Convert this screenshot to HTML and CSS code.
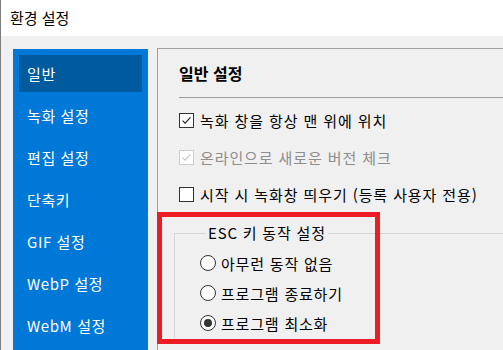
FILE: index.html
```html
<!DOCTYPE html>
<html lang="ko">
<head>
<meta charset="utf-8">
<link rel="stylesheet" href="styles.css">
</head>
<body>
<div class="window">
  <div class="titlebar">환경 설정</div>
  <div class="content">
    <nav class="sidebar">
      <div class="nav-item active">일반</div>
      <div class="nav-item">녹화 설정</div>
      <div class="nav-item">편집 설정</div>
      <div class="nav-item">단축키</div>
      <div class="nav-item">GIF 설정</div>
      <div class="nav-item">WebP 설정</div>
      <div class="nav-item">WebM 설정</div>
    </nav>
    <section class="panel">
      <h2 class="panel-title">일반 설정</h2>
      <div class="separator"></div>
      <div class="options">
        <label class="check-row"><span class="checkbox checked"><svg viewBox="0 0 15 15"><path d="M3 7.6 L6 10.6 L12 3.8" fill="none" stroke="#1a1a1a" stroke-width="1.2"/></svg></span>녹화 창을 항상 맨 위에 위치</label>
        <label class="check-row disabled"><span class="checkbox checked"><svg viewBox="0 0 15 15"><path d="M3 7.6 L6 10.6 L12 3.8" fill="none" stroke="#c4c4c4" stroke-width="1.2"/></svg></span>온라인으로 새로운 버전 체크</label>
        <label class="check-row"><span class="checkbox"></span>시작 시 녹화창 띄우기 (등록 사용자 전용)</label>
      </div>
      <fieldset class="group">
        <legend class="group-legend">ESC 키 동작 설정</legend>
        <label class="radio-row"><span class="radio"></span>아무런 동작 없음</label>
        <label class="radio-row"><span class="radio"></span>프로그램 종료하기</label>
        <label class="radio-row"><span class="radio selected"></span>프로그램 최소화</label>
      </fieldset>
      <div class="highlight"></div>
    </section>
  </div>
</div>
</body>
</html>
```

FILE: styles.css
```css
* { box-sizing: border-box; }
html, body { margin: 0; padding: 0; }
body {
  width: 503px;
  height: 350px;
  overflow: hidden;
  font-family: "Noto Sans CJK KR", "Noto Sans", sans-serif;
  font-size: 15px;
  color: #000;
  background: #fff;
}
.window {
  height: 350px;
  border-left: 1px solid #7f7f7f;
  display: flex;
  flex-direction: column;
}
.titlebar {
  height: 36px;
  flex: none;
  background: #fff;
  display: flex;
  align-items: center;
  padding-left: 9px;
  padding-bottom: 1px;
  font-size: 15px;
  line-height: 1;
}
.content {
  flex: 1;
  background: #f0f0f0;
  display: flex;
  padding: 12px 0 0 12px;
  gap: 9px;
}
.sidebar {
  width: 135px;
  flex: none;
  margin-top: 1px;
  background: #0078d7;
  padding: 6px;
  display: flex;
  flex-direction: column;
  gap: 5px;
}
.nav-item {
  height: 37px;
  flex: none;
  display: flex;
  align-items: center;
  padding-left: 8px;
  color: #fff;
  font-size: 15px;
  line-height: 1;
  letter-spacing: 0.6px;
}
.nav-item.active { background: #005a9e; }
.panel {
  flex: 1;
  position: relative;
  border-top: 1px solid #a0a0a0;
  border-left: 1px solid #a0a0a0;
  padding-left: 21px;
}
.panel-title {
  margin: 0;
  height: 48px;
  display: flex;
  align-items: center;
  font-size: 16px;
  font-weight: 600;
  line-height: 1;
}
.separator {
  height: 1px;
  background: #a0a0a0;
  margin-bottom: 4px;
}
.options {
  display: flex;
  flex-direction: column;
  letter-spacing: 0.9px;
}
.check-row {
  height: 37px;
  display: flex;
  align-items: center;
  gap: 6px;
  line-height: 1;
}
.check-row.disabled { color: #8d8d8d; }
.checkbox {
  width: 15px;
  height: 15px;
  flex: none;
  border: 1px solid #333;
  background: #fff;
  display: flex;
}
.checkbox svg { width: 13px; height: 13px; }
.disabled .checkbox { border-color: #cccccc; }
.group {
  margin: 11px 0 0 -5px;
  padding: 6px 0 0 25px;
  border: none;
  border-top: 1px solid #d5d5d5;
  border-left: 1px solid #d5d5d5;
  min-width: 0;
  letter-spacing: 0.8px;
}
.group-legend {
  padding: 0 2px;
  margin-left: 6px;
  font-size: 15px;
  line-height: 18px;
}
.radio-row {
  height: 30px;
  display: flex;
  align-items: center;
  gap: 5px;
  line-height: 1;
}
.radio {
  width: 16px;
  height: 16px;
  flex: none;
  border: 1px solid #333;
  border-radius: 50%;
  background: #fff;
  display: flex;
  align-items: center;
  justify-content: center;
}
.radio.selected::after {
  content: "";
  width: 8px;
  height: 8px;
  border-radius: 50%;
  background: #333;
}
.highlight {
  position: absolute;
  left: -1px;
  top: 163px;
  width: 223px;
  height: 132px;
  border: 5px solid #ed1c24;
  pointer-events: none;
}
```
